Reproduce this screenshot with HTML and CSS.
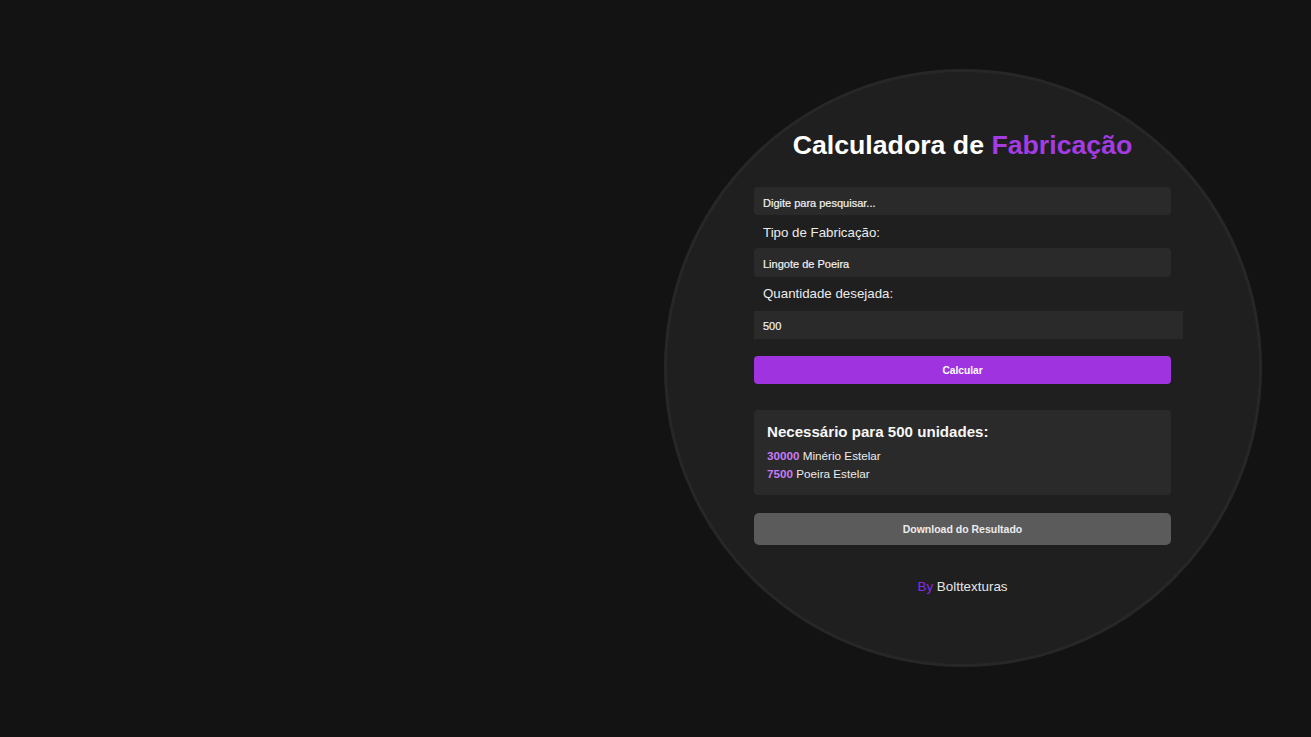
FILE: index.html
```html
<!DOCTYPE html>
<html lang="pt">
<head>
<meta charset="utf-8">
<title>Calculadora de Fabricação</title>
<link rel="stylesheet" href="styles.css">
</head>
<body>
<main class="stage">
  <section class="circle">
    <h1 class="title">Calculadora de <span class="accent">Fabricação</span></h1>
    <div class="form">
      <div class="field search"><span class="clip">Digite para pesquisar...</span></div>
      <label class="label label-first">Tipo de Fabricação:</label>
      <div class="field select">Lingote de Poeira</div>
      <label class="label label-second">Quantidade desejada:</label>
      <div class="field number">500</div>
      <button class="btn btn-primary">Calcular</button>
      <div class="result">
        <h3 class="result-title">Necessário para 500 unidades:</h3>
        <p class="result-line"><strong class="qty">30000</strong> Minério Estelar</p>
        <p class="result-line"><strong class="qty">7500</strong> Poeira Estelar</p>
      </div>
      <button class="btn btn-download">Download do Resultado</button>
    </div>
    <p class="credit"><span class="by">By</span> Bolttexturas</p>
  </section>
</main>
</body>
</html>
```

FILE: styles.css
```css
* { box-sizing: border-box; }

html, body {
  margin: 0;
  padding: 0;
  background: #131313;
  font-family: "Liberation Sans", Arial, sans-serif;
}

.stage {
  height: 737px;
  display: flex;
  align-items: flex-start;
  justify-content: flex-end;
  padding: 69px 49.5px 0 0;
}

.circle {
  width: 598px;
  height: 598px;
  flex: none;
  border-radius: 50%;
  border: 3px solid #272727;
  background: #1f1f1f;
  display: flex;
  flex-direction: column;
  align-items: center;
  padding-top: 57px;
}

.title {
  margin: 0;
  font-size: 26.7px;
  line-height: 32px;
  font-weight: 700;
  color: #ffffff;
  text-align: center;
}

.accent { color: #a33ce4; }

.form {
  width: 417px;
  margin-top: 26px;
  display: flex;
  flex-direction: column;
}

.field {
  background: #2a2a2a;
  border-radius: 4px;
  color: #f2f2f2;
  font-size: 11px;
  padding: 0 9px;
  -webkit-text-stroke: 0.2px #f2f2f2;
}

.search {
  height: 28px;
  padding-top: 10px;
}

.clip {
  display: block;
  height: 12px;
  line-height: 13px;
  overflow: hidden;
}

.select {
  height: 29px;
  display: flex;
  align-items: center;
  padding-top: 2px;
}

.number {
  width: 429px;
  height: 28px;
  display: flex;
  align-items: center;
  padding-top: 2px;
  border-radius: 0;
}

.label {
  display: block;
  font-size: 13.3px;
  line-height: 16px;
  color: #ececec;
  padding-left: 9px;
}

.label-first { margin: 10px 0 7px; }
.label-second { margin: 9px 0 9px; }

.btn {
  display: block;
  width: 100%;
  border: none;
  border-radius: 4px;
  font-family: "Liberation Sans", Arial, sans-serif;
  color: #ffffff;
  padding: 0;
  font-weight: 700;
}

.btn-primary {
  margin-top: 17px;
  height: 28px;
  background: #a033e0;
  font-size: 10.2px;
}

.result {
  margin-top: 26px;
  height: 85px;
  background: #2a2a2a;
  border-radius: 4px;
  padding: 13px 12px 0 13px;
}

.result-title {
  margin: 0 0 6px;
  font-size: 15.1px;
  line-height: 18px;
  font-weight: 700;
  color: #f7f7f7;
}

.result-line {
  margin: 0;
  font-size: 11.7px;
  line-height: 18px;
  color: #ececec;
}

.qty {
  color: #c57cf7;
  font-weight: 700;
}

.btn-download {
  margin-top: 18px;
  height: 32px;
  background: #5b5b5b;
  color: #ececec;
  font-size: 10.5px;
  border-radius: 5px;
}

.credit {
  margin: 33px 0 0;
  font-size: 13.4px;
  line-height: 17px;
  color: #e6e6e6;
}

.by { color: #8a2be2; }
```
